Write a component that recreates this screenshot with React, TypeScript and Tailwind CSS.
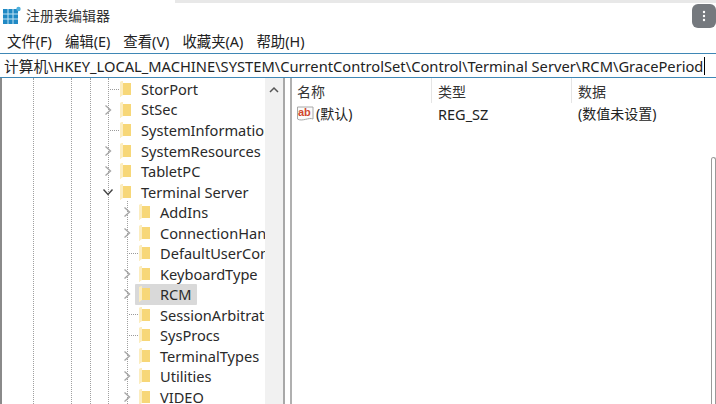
import React from "react";

const font = { fontFamily: '"Noto Sans", "Noto Sans CJK SC", sans-serif' };

function Folder() {
  return (
    <svg width="13" height="18" viewBox="0 0 13 18" className="shrink-0">
      <path d="M1 2 L4 1 L4 3 L11 3 L11 15 L3 15 L1 17 Z" fill="#f9e3a0" />
      <path d="M1 2 L4 1 L4 15 L1 17 Z" fill="#fcedc0" />
      <path d="M4 3 L12 3 L12 15 L4 15 Z" fill="#f7d778" />
    </svg>
  );
}

function Chevron({ open }: { open?: boolean }) {
  return (
    <svg width="12" height="12" viewBox="0 0 12 12" className="shrink-0">
      {open ? (
        <path d="M1.5 3.5 L6 8.5 L10.5 3.5" fill="none" stroke="#444" strokeWidth="1.4" />
      ) : (
        <path d="M3.5 1.5 L8.5 6 L3.5 10.5" fill="none" stroke="#a6a6a6" strokeWidth="1.4" />
      )}
    </svg>
  );
}

type Row = { label: string; level: number; kind: "leaf" | "closed" | "open"; selected?: boolean };

const rows: Row[] = [
  { label: "StorPort", level: 0, kind: "leaf" },
  { label: "StSec", level: 0, kind: "closed" },
  { label: "SystemInformation", level: 0, kind: "leaf" },
  { label: "SystemResources", level: 0, kind: "closed" },
  { label: "TabletPC", level: 0, kind: "closed" },
  { label: "Terminal Server", level: 0, kind: "open" },
  { label: "AddIns", level: 1, kind: "closed" },
  { label: "ConnectionHandler", level: 1, kind: "closed" },
  { label: "DefaultUserConfiguration", level: 1, kind: "leaf" },
  { label: "KeyboardType", level: 1, kind: "closed" },
  { label: "RCM", level: 1, kind: "closed", selected: true },
  { label: "SessionArbitrationHelper", level: 1, kind: "leaf" },
  { label: "SysProcs", level: 1, kind: "leaf" },
  { label: "TerminalTypes", level: 1, kind: "closed" },
  { label: "Utilities", level: 1, kind: "closed" },
  { label: "VIDEO", level: 1, kind: "closed" },
];

function TreeRow({ row }: { row: Row }) {
  return (
    <div className={`flex h-[20.53px] shrink-0 items-center ${row.level === 0 ? "pl-[99px]" : "pl-[118px]"}`}>
      <div className="flex w-[18px] shrink-0 items-center justify-start pl-[1px]">
        {row.kind === "leaf" ? (
          <span className="ml-[8px] w-[9px] border-t border-dotted border-[#9a9a9a]" />
        ) : (
          <Chevron open={row.kind === "open"} />
        )}
      </div>
      <div className={`flex items-center ${row.selected ? "h-[21px] w-[62px] -ml-[3px] pl-[3px] bg-[#d9d9d9] rounded-[1px]" : ""}`}>
        <Folder />
        <span className="ml-[9px] whitespace-nowrap text-[14.6px] leading-none text-[#2a2a2a]">{row.label}</span>
      </div>
    </div>
  );
}

function Guide({ x, top = 0 }: { x: number; top?: number }) {
  return (
    <span
      className="absolute bottom-0 border-l border-dotted border-[#a0a0a0]"
      style={{ left: x, top }}
    />
  );
}

export default function App() {
  return (
    <div className="flex h-[404px] w-[716px] flex-col overflow-hidden bg-white text-[#222]" style={font}>
      <div className="flex h-[3px] shrink-0">
        <div className="w-[175px] bg-white" />
        <div className="flex-1 bg-[#e8e8e8]" />
      </div>

      <div className="relative flex h-[27px] shrink-0 items-center pb-[2px] pl-[3px]">
        <svg width="18" height="19" viewBox="0 0 18 19" className="shrink-0">
          <rect x="0" y="3" width="15" height="15" fill="#2089c4" />
          <path d="M5 3V18M10 3V18M0 8H15M0 13H15" stroke="#bfe3f5" strokeWidth="1" />
          <circle cx="15.5" cy="3" r="2.2" fill="#4fb0dc" />
        </svg>
        <span className="ml-[5px] text-[14px] leading-none text-[#333]">注册表编辑器</span>
        <div className="absolute right-0 top-[1px] flex h-[24px] w-[24px] items-center justify-center rounded-[6px] bg-[#75797e]">
          <svg width="4" height="12" viewBox="0 0 4 12">
            <circle cx="2" cy="2" r="1.2" fill="#fff" />
            <circle cx="2" cy="6" r="1.2" fill="#fff" />
            <circle cx="2" cy="10" r="1.2" fill="#fff" />
          </svg>
        </div>
      </div>

      <div className="flex h-[23px] shrink-0 items-center gap-[13px] pl-[7px] pt-[2px] text-[14.4px] leading-none text-[#222]">
        <span>文件(F)</span>
        <span>编辑(E)</span>
        <span>查看(V)</span>
        <span>收藏夹(A)</span>
        <span>帮助(H)</span>
      </div>

      <div className="flex h-[25px] shrink-0 items-center border-y border-[#3f87b5] pl-[4px] pt-[1px] text-[14.7px] leading-none text-[#222]">
        <span className="whitespace-nowrap">计算机\HKEY_LOCAL_MACHINE\SYSTEM\CurrentControlSet\Control\Terminal Server\RCM\GracePeriod</span>
        <span className="ml-[1px] h-[18px] w-px bg-black" />
      </div>

      <div className="flex min-h-0 flex-1">
        <div className="relative flex w-[285px] shrink-0 border-l-2 border-r-2 border-l-[#8a8a8a] border-r-[#a8a8a8]">
          <div className="relative w-[263px] shrink-0 overflow-hidden">
            <Guide x={31} />
            <Guide x={69} />
            <Guide x={88} />
            <Guide x={106} />
            <Guide x={125} top={123} />
            <div className="relative flex flex-col pt-[1px]">
              {rows.map((r) => (
                <TreeRow key={r.label} row={r} />
              ))}
            </div>
          </div>
          <div className="flex w-[18px] shrink-0 justify-center bg-[#f1f1f1] pt-[8px]">
            <svg width="12" height="8" viewBox="0 0 12 8">
              <path d="M2 6 L6 2 L10 6" fill="none" stroke="#555" strokeWidth="1.5" />
            </svg>
          </div>
        </div>

        <div className="w-[5px] shrink-0 bg-white" />

        <div className="relative flex min-w-0 flex-1 flex-col border-l-2 border-[#b0b0b0]">
          <div className="flex h-[25px] shrink-0 items-center text-[14px] leading-none text-[#333]">
            <div className="h-full w-[139px] pl-[5px] pt-[7px]">名称</div>
            <div className="h-full w-[140px] border-l border-[#e5e5e5] pl-[6px] pt-[7px]">类型</div>
            <div className="h-full flex-1 border-l border-[#e5e5e5] pl-[6px] pt-[7px]">数据</div>
          </div>
          <div className="flex h-[22px] shrink-0 items-center text-[14.5px] leading-none text-[#222]">
            <div className="flex w-[139px] items-center pl-[4px]">
              <svg width="19" height="18" viewBox="0 0 19 18" className="shrink-0">
                <path d="M1.5 2 H17 V14 C13 12 6 17 1.5 14 Z" fill="#fbfbfb" stroke="#a8a8a8" />
                <text x="2" y="11" fontSize="11" fontWeight="700" fill="#d0472f" fontFamily="Liberation Sans, sans-serif">ab</text>
              </svg>
              <span className="ml-[1px] text-[14px]">(默认)</span>
            </div>
            <div className="w-[140px] pl-[7px]">REG_SZ</div>
            <div className="flex-1 pl-[7px] text-[14px]">(数值未设置)</div>
          </div>
          <div className="absolute bottom-0 right-0 top-[79px] w-[5px] rounded-t-[3px] border border-b-0 border-[#9a9a9a] bg-white" />
        </div>
      </div>
    </div>
  );
}
